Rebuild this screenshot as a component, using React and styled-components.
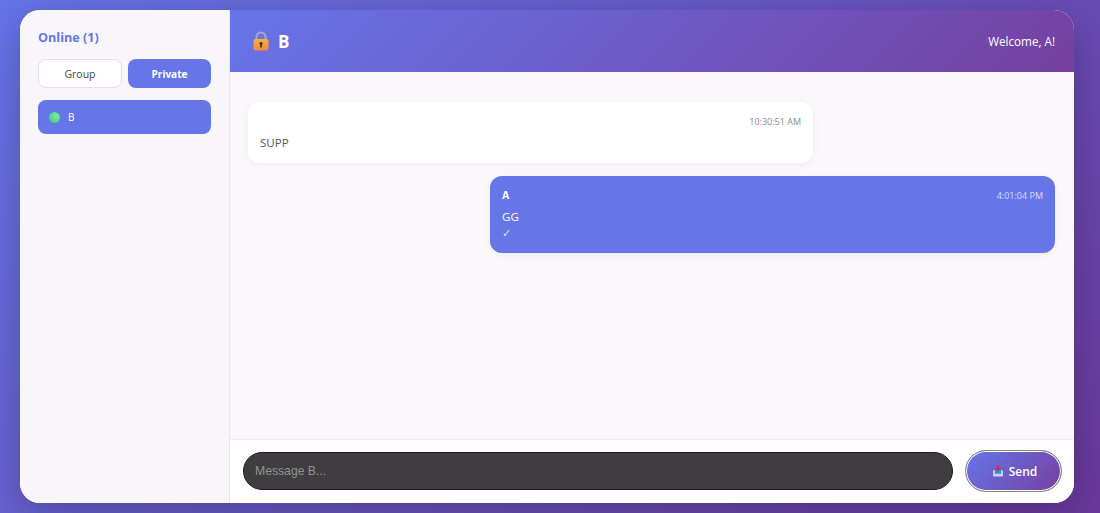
import React from 'react';
import styled, { createGlobalStyle } from 'styled-components';

const GlobalStyle = createGlobalStyle`
  * {
    box-sizing: border-box;
  }
  html,
  body {
    margin: 0;
    height: 100%;
    overflow: hidden;
  }
  body {
    font-family: 'Open Sans', 'Noto Sans', sans-serif;
    background: linear-gradient(135deg, #6675ea 0%, #6a389c 100%);
  }
`;

const Page = styled.div`
  height: 513px;
  padding: 10px 26px 10px 20px;
`;

const Card = styled.div`
  display: flex;
  height: 493px;
  border-radius: 20px;
  overflow: hidden;
  background: #fff;
  box-shadow: 0 10px 40px rgba(0, 0, 0, 0.25);
`;

const Sidebar = styled.aside`
  width: 210px;
  flex-shrink: 0;
  padding: 19px 18px;
  background: #f8f6fa;
  border-right: 1px solid #e9e7ec;
`;

const SideTitle = styled.h3`
  margin: 0 0 12px;
  font-size: 12.6px;
  line-height: 18px;
  font-weight: 700;
  color: #6676e8;
`;

const Tabs = styled.div`
  display: grid;
  grid-template-columns: 84px 83px;
  gap: 6px;
  margin-bottom: 12px;
`;

const Tab = styled.button`
  height: 29px;
  padding: 0;
  border-radius: 8px;
  border: ${p => (p.$active ? 'none' : '1px solid #e2e2e6')};
  background: ${p => (p.$active ? '#6676e8' : '#fff')};
  color: ${p => (p.$active ? '#fff' : '#444')};
  font-family: inherit;
  font-size: ${p => (p.$active ? '10px' : '10.5px')};
  font-weight: ${p => (p.$active ? 700 : 500)};
`;

const UserItem = styled.div`
  display: flex;
  align-items: center;
  gap: 8px;
  height: 34px;
  padding: 0 11px;
  border-radius: 8px;
  background: #6676e8;
  color: #fff;
  font-size: 10px;
`;

const Dot = styled.span`
  width: 11px;
  height: 11px;
  border-radius: 50%;
  background: radial-gradient(circle at 65% 35%, #7cf09c, #4fd48a 60%, #4fb08f);
`;

const Main = styled.main`
  flex: 1;
  min-width: 0;
  display: flex;
  flex-direction: column;
`;

const Header = styled.header`
  display: flex;
  align-items: center;
  justify-content: space-between;
  height: 62px;
  padding: 0 19px 0 22px;
  background: linear-gradient(135deg, #6675ea 0%, #7540a0 100%);
  color: #fff;
`;

const HeaderTitle = styled.h2`
  display: flex;
  align-items: center;
  gap: 8px;
  margin: 0;
  font-size: 17px;
  font-weight: 700;
`;

const Welcome = styled.span`
  font-size: 11.7px;
  font-weight: 500;
`;

const Messages = styled.section`
  flex: 1;
  display: flex;
  flex-direction: column;
  gap: 13px;
  padding: 30px 19px 0 18px;
  background: #faf8fb;
`;

const Bubble = styled.div`
  width: 565px;
  padding: 12px;
  border-radius: 12px;
  align-self: ${p => (p.$own ? 'flex-end' : 'flex-start')};
  background: ${p => (p.$own ? '#6676e8' : '#fff')};
  color: ${p => (p.$own ? '#fff' : '#555')};
  box-shadow: 0 2px 8px rgba(0, 0, 0, 0.05);
`;

const BubbleTop = styled.div`
  display: flex;
  align-items: center;
  justify-content: space-between;
  height: 14px;
  margin-bottom: 6px;
`;

const Sender = styled.span`
  font-size: 10.5px;
  font-weight: 700;
`;

const Time = styled.span`
  font-size: 9px;
  color: ${p => (p.$own ? 'rgba(255, 255, 255, 0.75)' : '#8a8a8a')};
`;

const BubbleText = styled.div`
  font-size: 11.6px;
  line-height: 17px;
`;

const Tick = styled.div`
  padding-top: 2px;
  font-family: 'DejaVu Sans', sans-serif;
  font-size: 11px;
  line-height: 14px;
  color: rgba(255, 255, 255, 0.8);
`;

const Composer = styled.form`
  display: flex;
  align-items: center;
  gap: 12px;
  height: 64px;
  padding: 0 12px 1px 13px;
  background: #fff;
  border-top: 1px solid #eeecf1;
`;

const MessageInput = styled.input`
  flex: 1;
  min-width: 0;
  height: 38px;
  padding: 0 11px;
  border-radius: 19px;
  border: 1px solid #1d1d1d;
  background: #3f3d40;
  color: #fff;
  font-family: 'Liberation Sans', Arial, sans-serif;
  font-size: 12.2px;
  outline: none;

  &::placeholder {
    color: #929292;
    opacity: 1;
  }
`;

const SendButton = styled.button`
  display: flex;
  align-items: center;
  justify-content: center;
  gap: 6px;
  width: 97px;
  height: 42px;
  padding: 0 0 0 3px;
  border-radius: 21px;
  border: 1px solid #858585;
  box-shadow: inset 0 0 0 1px #fff;
  background: linear-gradient(135deg, #6675ea 0%, #7540a0 100%);
  color: #fff;
  font-family: inherit;
  font-size: 12px;
  font-weight: 600;
`;

function LockIcon() {
  return (
    <svg width="18" height="20" viewBox="0 0 18 20">
      <defs>
        <linearGradient id="lockBody" x1="0" y1="0" x2="0" y2="1">
          <stop offset="0" stopColor="#fbb03b" />
          <stop offset="1" stopColor="#f08a3c" />
        </linearGradient>
      </defs>
      <path d="M4.5 9V6a4.5 4.5 0 0 1 9 0v3" fill="none" stroke="#a9a9c0" strokeWidth="2" />
      <rect x="1.5" y="8" width="15" height="11.5" rx="2" fill="url(#lockBody)" />
      <circle cx="9" cy="12.5" r="1.6" fill="#3a2a20" />
      <rect x="8.2" y="12.5" width="1.6" height="4" fill="#3a2a20" />
    </svg>
  );
}

function OutboxIcon() {
  return (
    <svg width="10" height="12" viewBox="0 0 11 12">
      <path d="M1 5h9l1 1v5a1 1 0 0 1-1 1H1a1 1 0 0 1-1-1V6z" fill="#c9d3e6" />
      <rect x="2" y="5" width="7" height="4" fill="#2f8fd6" />
      <path d="M4.3 0h2.4v3h1.6L5.5 6.5 2.7 3h1.6z" fill="#d8234a" />
    </svg>
  );
}

export default function App() {
  return (
    <>
      <GlobalStyle />
      <Page>
        <Card>
          <Sidebar>
            <SideTitle>Online (1)</SideTitle>
            <Tabs>
              <Tab type="button">Group</Tab>
              <Tab type="button" $active>
                Private
              </Tab>
            </Tabs>
            <UserItem>
              <Dot />B
            </UserItem>
          </Sidebar>
          <Main>
            <Header>
              <HeaderTitle>
                <LockIcon />B
              </HeaderTitle>
              <Welcome>Welcome, A!</Welcome>
            </Header>
            <Messages>
              <Bubble>
                <BubbleTop>
                  <span />
                  <Time>10:30:51 AM</Time>
                </BubbleTop>
                <BubbleText>SUPP</BubbleText>
              </Bubble>
              <Bubble $own>
                <BubbleTop>
                  <Sender>A</Sender>
                  <Time $own>4:01:04 PM</Time>
                </BubbleTop>
                <BubbleText>GG</BubbleText>
                <Tick>✓</Tick>
              </Bubble>
            </Messages>
            <Composer>
              <MessageInput placeholder="Message B..." />
              <SendButton type="button">
                <OutboxIcon />
                Send
              </SendButton>
            </Composer>
          </Main>
        </Card>
      </Page>
    </>
  );
}
